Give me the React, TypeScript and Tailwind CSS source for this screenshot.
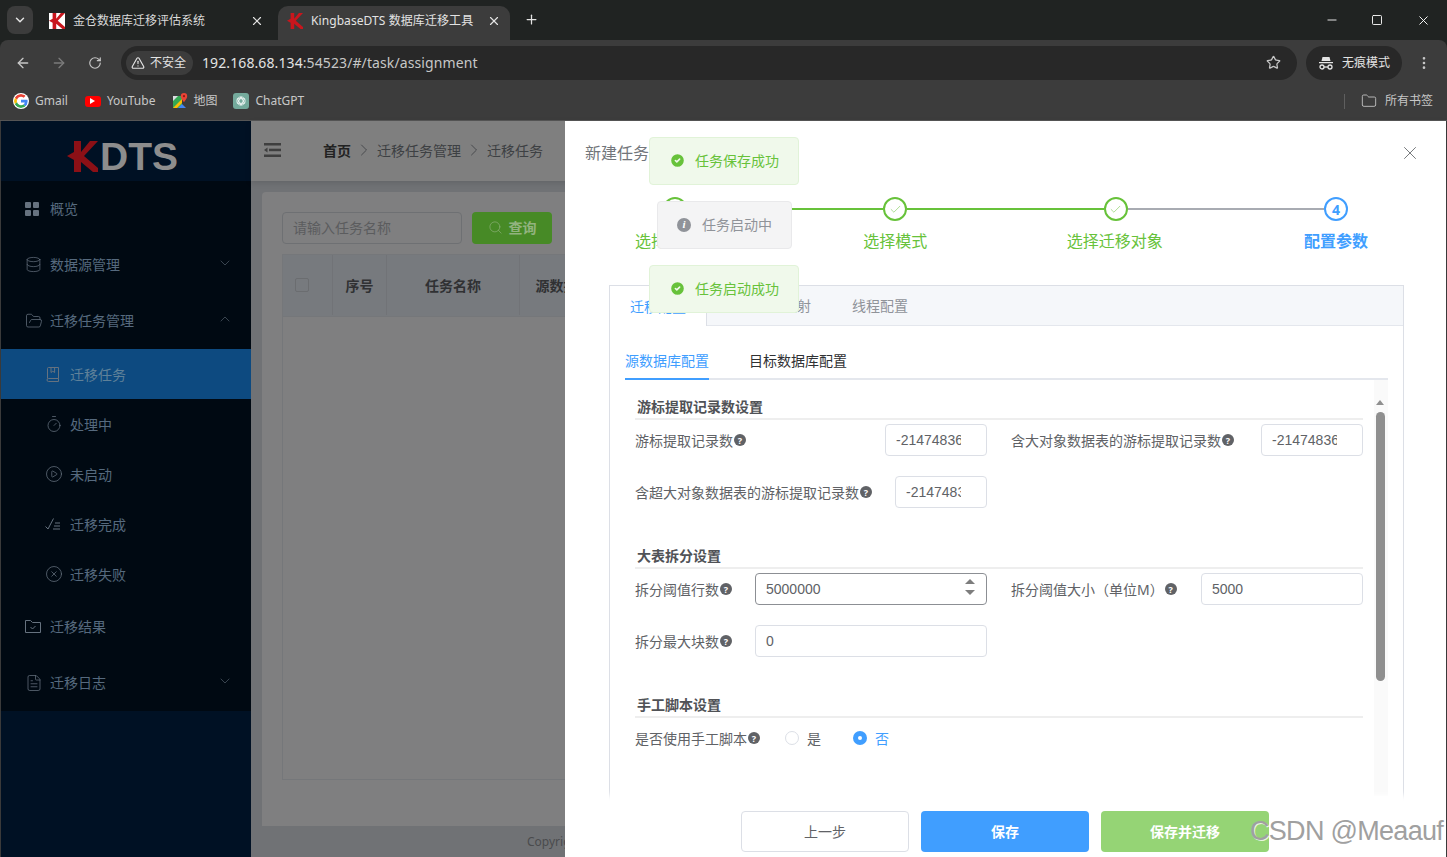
import type { ReactNode } from "react";
import {
  ArrowLeft, ArrowRight, Check, ChevronDown, ChevronRight, ChevronUp, CircleCheck, CirclePlay, CircleX, Database,
  EllipsisVertical, FileText, Folder, FolderOpen, Minus, Plus, RotateCw, Search, Square, Star, Timer, TriangleAlert, X,
} from "lucide-react";

const KMark = ({ className }: { className: string }) => (
  <svg viewBox="0 0 31 31" className={className}>
    <path fill="currentColor" d="M7 0h7v11L23 0h8L17 15l14 12v4h-5L14 21v10H7V19L0 15l7-4z" />
  </svg>
);

const GoogleIcon = () => (
  <svg viewBox="0 0 48 48" className="h-4 w-4 rounded-full bg-white p-px">
    <path fill="#EA4335" d="M24 9.5c3.5 0 6.700 1.200 9.200 3.600l6.900-6.900C35.900 2.400 30.500 0 24 0 14.600 0 6.500 5.400 2.600 13.200l8 6.200C12.500 13.600 17.800 9.500 24 9.500z" />
    <path fill="#4285F4" d="M46.900 24.500c0-1.600-.1-3.100-.4-4.500H24v9h12.900c-.6 3-2.200 5.500-4.800 7.200l7.700 6c4.500-4.200 7.100-10.300 7.100-17.700z" />
    <path fill="#FBBC05" d="M10.500 28.600c-.5-1.500-.8-3-.8-4.600s.3-3.100.8-4.600l-8-6.200C.9 16.500 0 20.100 0 24s.9 7.500 2.600 10.800l7.900-6.200z" />
    <path fill="#34A853" d="M24 48c6.500 0 11.900-2.100 15.900-5.800l-7.700-6c-2.200 1.400-4.900 2.300-8.200 2.300-6.200 0-11.500-4.200-13.400-9.800l-8 6.200C6.500 42.600 14.600 48 24 48z" />
  </svg>
);

const MapsIcon = () => (
  <svg viewBox="0 0 16 16" className="h-4 w-4">
    <path fill="#34A853" d="M1 3h9v12H1z" />
    <path fill="#FBBC05" d="M1 15 10 6v4l-5 5z" />
    <path fill="#4285F4" d="M6 15l4-4 4 4z" />
    <path fill="#DADCE0" d="M1 3h5L1 8z" />
    <path fill="#EA4335" d="M12 0a3.200 3.200 0 0 0-3.200 3.200C8.800 5.500 12 9 12 9s3.200-3.500 3.200-5.800A3.200 3.200 0 0 0 12 0z" />
    <circle cx="12" cy="3.200" r="1.100" fill="#8a1c14" />
  </svg>
);

const IncognitoIcon = () => (
  <svg viewBox="0 0 16 16" className="h-4 w-4 text-[#e3e3e3]" fill="none" stroke="currentColor" strokeWidth="1.300">
    <path fill="currentColor" stroke="none" d="M4.500 2h7l1 4h-9zM1 7h14v1.300H1z" />
    <circle cx="4" cy="12" r="2" />
    <circle cx="12" cy="12" r="2" />
    <path d="M6 12h4" />
  </svg>
);

const ChatGptIcon = () => (
  <span className="flex h-4 w-4 items-center justify-center rounded-[3px] bg-[#74aa9c]">
    <svg viewBox="0 0 16 16" className="h-3 w-3" fill="none" stroke="white" strokeWidth="1">
      <circle cx="8" cy="8" r="5.500" />
      <path d="M8 2.500 12.700 11H3.300z" />
      <path d="M3.300 5h9.400L8 13.500z" />
    </svg>
  </span>
);

const GridIcon = () => (
  <svg viewBox="0 0 14 14" className="h-[14px] w-[14px] fill-[#66727f]">
    <rect x="0" y="0" width="6" height="6" rx="1" />
    <rect x="8" y="0" width="6" height="6" rx="1" />
    <rect x="0" y="8" width="6" height="6" rx="1" />
    <rect x="8" y="8" width="6" height="6" rx="1" />
  </svg>
);

const BookIcon = () => (
  <svg viewBox="0 0 16 16" className="h-4 w-4" fill="none" stroke="currentColor" strokeWidth="1">
    <path d="M2.500 12.500V2.500a1 1 0 0 1 1-1h10v11h-10a1.500 1.500 0 0 0 0 3h10v-3" />
    <path d="M6 1.500v5l1.800-1.300 1.800 1.300v-5" />
  </svg>
);

const DoneIcon = () => (
  <svg viewBox="0 0 16 16" className="h-4 w-4" fill="none" stroke="currentColor" strokeWidth="1">
    <path d="M0.500 10.500 3 13 8.500 2.500M10 7h5M9 10h6M8 13h7" />
  </svg>
);

const FolderDoneIcon = () => (
  <svg viewBox="0 0 16 16" className="h-4 w-4" fill="none" stroke="currentColor" strokeWidth="1">
    <path d="M.5 1.500h5l2 2h8v10H.5z" />
    <path d="M5.500 8 7.500 10 10.500 7" />
  </svg>
);

const HamburgerIcon = () => (
  <svg viewBox="0 0 17 14" className="h-[14px] w-[17px] fill-[#3f3f3f]">
    <rect x="0" y="0" width="17" height="2.500" />
    <rect x="5" y="5.700" width="12" height="2.500" />
    <rect x="0" y="11.500" width="17" height="2.500" />
    <path d="M0 7 3.500 4.500v5z" />
  </svg>
);

type MenuItem = { label: string; icon: ReactNode; arrow?: "up" | "down"; sub?: boolean; active?: boolean };

const menu: MenuItem[] = [
  { label: "概览", icon: <GridIcon /> },
  { label: "数据源管理", icon: <Database size={17} strokeWidth={1} />, arrow: "down" },
  { label: "迁移任务管理", icon: <FolderOpen size={18} strokeWidth={1} />, arrow: "up" },
  { label: "迁移任务", icon: <BookIcon />, sub: true, active: true },
  { label: "处理中", icon: <Timer size={18} strokeWidth={1} />, sub: true },
  { label: "未启动", icon: <CirclePlay size={18} strokeWidth={1} />, sub: true },
  { label: "迁移完成", icon: <DoneIcon />, sub: true },
  { label: "迁移失败", icon: <CircleX size={18} strokeWidth={1} />, sub: true },
  { label: "迁移结果", icon: <FolderDoneIcon /> },
  { label: "迁移日志", icon: <FileText size={18} strokeWidth={1} />, arrow: "down" },
];

function Sidebar() {
  return (
    <aside className="flex w-[250px] shrink-0 flex-col bg-[#001124]">
      <div className="flex h-[60px] items-center justify-center gap-[2px] pt-[10px] pr-[7px]">
        <KMark className="h-[31px] w-[31px] text-[#8c1016]" />
        <span className="font-['Liberation_Sans',sans-serif] text-[39px] leading-none font-bold text-[#8d8d8d]">DTS</span>
      </div>
      <nav className="bg-[#000912]">
        {menu.map((item) => (
          <div
            key={item.label}
            className={`flex items-center text-[14px] ${item.sub ? "h-[50px] pl-[44px]" : "h-[56px] pb-[1px] pl-[24px]"} ${
              item.active ? "bg-[#0d4a80] text-[#5f8199]" : "text-[#566a7e]"
            }`}
          >
            <span className="flex w-[25px] shrink-0 text-[#66727f]">{item.icon}</span>
            <span className="flex-1">{item.label}</span>
            {item.arrow === "down" && <ChevronDown size={16} strokeWidth={1} className="mr-[18px] mb-[3px] text-[#56626e]" />}
            {item.arrow === "up" && <ChevronUp size={16} strokeWidth={1} className="mr-[18px] mb-[3px] text-[#56626e]" />}
          </div>
        ))}
      </nav>
    </aside>
  );
}

function BrowserChrome() {
  return (
    <header className="h-[120px] shrink-0 bg-[#202322] text-[#e3e3e3]">
      <div className="flex h-[40px] items-end">
        <div className="mb-[6px] ml-[7px] flex h-[28px] w-[26px] items-center justify-center rounded-[8px] bg-[#3c3c3c]">
          <ChevronDown size={14} strokeWidth={2.500} />
        </div>
        <div className="flex h-[34px] w-[245px] items-center pr-[14px] pb-[4px] pl-[16px]">
          <span className="flex h-4 w-4 items-center justify-center bg-white">
            <KMark className="h-4 w-4 text-[#c8161d]" />
          </span>
          <span className="ml-2 flex-1 text-[12px] text-[#d9d9d9]">金仓数据库迁移评估系统</span>
          <X size={14} />
        </div>
        <div className="flex h-[34px] w-[232px] items-center rounded-t-[10px] bg-[#3c3c3c] pr-[9px] pb-[4px] pl-[9px]">
          <KMark className="h-4 w-4 text-[#c8161d]" />
          <span className="ml-[8px] flex-1 text-[12px] tracking-[0.080px] text-[#e3e3e3]">KingbaseDTS 数据库迁移工具</span>
          <X size={14} />
        </div>
        <Plus size={15} className="mb-[13px] ml-[14px]" />
        <div className="flex flex-1 justify-end self-start pt-[13px] pr-[16px] text-white">
          <Minus size={14} strokeWidth={1.500} className="mr-[32px]" />
          <Square size={12} strokeWidth={1.800} className="mt-px mr-[33px]" />
          <X size={15} strokeWidth={1.500} />
        </div>
      </div>
      <div className="h-[80px] rounded-t-[8px] bg-[#3c3c3c] pl-px">
        <div className="flex h-[45px] items-center">
          <ArrowLeft size={16} className="ml-[14px] text-[#c7c7c7]" />
          <ArrowRight size={16} className="ml-[20px] text-[#7b7b7b]" />
          <RotateCw size={14} className="ml-[21px] text-[#c7c7c7]" />
          <div className="ml-[19px] flex h-[34px] w-[1176px] items-center rounded-full bg-[#282828] pr-[16px] pl-[5px]">
            <div className="flex h-[24px] w-[67px] shrink-0 items-center gap-[5px] rounded-full bg-[#3c3c3c] pl-[5px] text-[12px]">
              <TriangleAlert size={14} />
              <span>不安全</span>
            </div>
            <div className="ml-[9px] flex-1 text-[14px] tracking-[0.100px] text-[#c7c7c7]">
              <span className="text-[#e3e3e3]">192.168.68.134</span>:54523/#/task/assignment
            </div>
            <Star size={15} className="text-[#c7c7c7]" />
          </div>
          <div className="ml-[9px] flex h-[34px] w-[96px] items-center gap-[8px] rounded-full bg-[#282828] pl-[12px] text-[12px]">
            <IncognitoIcon />
            <span>无痕模式</span>
          </div>
          <EllipsisVertical size={16} className="ml-[14px] text-[#c7c7c7]" />
        </div>
        <div className="flex h-[35px] items-center pb-[3px] text-[12px] text-[#c7c7c7]">
          <span className="ml-[12px] flex items-center gap-[6px]"><GoogleIcon />Gmail</span>
          <span className="ml-[17px] flex items-center gap-[6px]">
            <span className="flex h-[11px] w-4 items-center justify-center rounded-[3px] bg-[#f00]">
              <span className="h-0 w-0 border-y-[3px] border-l-[5px] border-y-transparent border-l-white" />
            </span>
            YouTube
          </span>
          <span className="ml-[17px] flex items-center gap-[5px]"><MapsIcon />地图</span>
          <span className="ml-[16px] flex items-center gap-[6px]"><ChatGptIcon />ChatGPT</span>
          <span className="ml-auto h-[15px] w-px bg-[#5f5f5f]" />
          <Folder size={16} strokeWidth={1.300} className="ml-[16px]" />
          <span className="mr-[14px] ml-[8px]">所有书签</span>
        </div>
      </div>
    </header>
  );
}

function MainBehind() {
  return (
    <main className="flex min-w-0 flex-1 flex-col bg-[#707275]">
      <div className="flex h-[60px] shrink-0 items-center bg-[#7f7f7f] pb-[2px] pl-[13px] text-[14px] text-[#3d4043] shadow-[0_2px_6px_rgba(0,0,0,0.12)]">
        <HamburgerIcon />
        <span className="ml-[42px] font-bold text-[#222]">首页</span>
        <ChevronRight size={20} strokeWidth={1} className="mx-[3px]" />
        <span>迁移任务管理</span>
        <ChevronRight size={20} strokeWidth={1} className="mx-[3px]" />
        <span>迁移任务</span>
      </div>
      <div className="mx-[11px] mt-[11px] flex h-[634px] flex-col rounded-t-[4px] bg-[#7f7f80] px-[20px] pt-[20px]">
        <div className="flex gap-[10px]">
          <div className="flex h-[32px] w-[180px] items-center rounded-[4px] border border-[#6e7073] pb-px pl-[10px] text-[14px] text-[#5b5c5e]">请输入任务名称</div>
          <div className="flex h-[32px] w-[80px] items-center justify-center gap-[6px] rounded-[4px] bg-[#478a26] pb-px text-[14px] font-bold text-[#92b37f]">
            <Search size={15} strokeWidth={1} />查询
          </div>
        </div>
        <div className="mt-[10px] flex-1 border border-[#75777a]">
          <div className="flex h-[62px] border-b border-[#75777a] bg-[#777a7e] pb-px text-[14px] font-bold text-[#303133]">
            <div className="flex w-[50px] items-center border-r border-[#717377] pl-[12px]">
              <span className="h-[14px] w-[14px] rounded-[2px] border border-[#6b6d70]" />
            </div>
            <div className="flex w-[54px] items-center justify-center border-r border-[#717377]">序号</div>
            <div className="flex w-[133px] items-center justify-center border-r border-[#717377]">任务名称</div>
            <div className="flex w-[88px] items-center justify-center border-r border-[#717377]">源数据库</div>
          </div>
        </div>
        <div className="h-[46px]" />
      </div>
      <div className="flex flex-1 items-center pl-[276px] text-[12px] text-[#4a4b4d]">Copyright © 2024</div>
    </main>
  );
}

function StepCircle({ n }: { n?: number }) {
  if (n) {
    return (
      <span className="flex h-[24px] w-[24px] shrink-0 items-center justify-center rounded-full border-2 border-[#409eff] text-[14px] font-bold text-[#409eff]">
        {n}
      </span>
    );
  }
  return (
    <span className="flex h-[24px] w-[24px] shrink-0 items-center justify-center rounded-full border-2 border-[#67c23a] text-[#67c23a]">
      <Check size={13} strokeWidth={1} />
    </span>
  );
}

function Help({ className = "ml-px" }: { className?: string }) {
  return (
    <span className={`inline-flex h-[12px] w-[12px] shrink-0 items-center justify-center rounded-full bg-[#606266] text-[9px] leading-none font-bold text-white ${className}`}>?</span>
  );
}

function Field({ label, value, width, focused }: { label: string; value: string; width: string; focused?: boolean }) {
  return (
    <div className="flex h-[32px] items-center justify-between">
      <span className="flex items-center text-[14px] text-[#606266]">
        {label}
        <Help />
      </span>
      <div className={`relative h-[32px] ${width}`}>
        <input
          readOnly
          value={value}
          className={`h-full w-full rounded-[4px] border bg-white pr-[25px] pl-[10px] font-['Liberation_Sans',sans-serif] text-[14px] text-[#606266] outline-none ${
            focused ? "border-[#8c8f94]" : "border-[#dcdfe6]"
          }`}
        />
        {focused && (
          <span className="absolute top-[6px] right-[12px] flex flex-col gap-[6px]">
            <span className="h-0 w-0 border-x-[5px] border-b-[5px] border-x-transparent border-b-[#7d7d7d]" />
            <span className="h-0 w-0 border-x-[5px] border-t-[5px] border-x-transparent border-t-[#7d7d7d]" />
          </span>
        )}
      </div>
    </div>
  );
}

function SectionTitle({ children, className = "" }: { children: ReactNode; className?: string }) {
  return (
    <div className={`h-[22px] border-b-2 border-[#eeeeee] pl-[2px] text-[14px] leading-[18px] font-bold text-[#505256] ${className}`}>
      {children}
    </div>
  );
}

function ConfigForm() {
  return (
    <div className="flex h-[416px] pl-[10px]">
      <div className="flex-1 pt-[18px] pr-[11px]">
        <SectionTitle>游标提取记录数设置</SectionTitle>
        <div className="mt-[4px] grid grid-cols-2 gap-x-[24px] gap-y-[20px]">
          <Field label="游标提取记录数" value="-2147483648" width="w-[102px]" />
          <Field label="含大对象数据表的游标提取记录数" value="-2147483648" width="w-[102px]" />
          <Field label="含超大对象数据表的游标提取记录数" value="-2147483648" width="w-[92px]" />
        </div>
        <SectionTitle className="mt-[39px]">大表拆分设置</SectionTitle>
        <div className="mt-[4px] grid grid-cols-2 gap-x-[24px] gap-y-[20px]">
          <Field label="拆分阈值行数" value="5000000" width="w-[232px]" focused />
          <Field label="拆分阈值大小（单位M）" value="5000" width="w-[162px]" />
          <Field label="拆分最大块数" value="0" width="w-[232px]" />
        </div>
        <SectionTitle className="mt-[39px]">手工脚本设置</SectionTitle>
        <div className="mt-[4px] flex h-[32px] items-center text-[14px] text-[#606266]">
          <span>是否使用手工脚本</span>
          <Help />
          <span className="ml-[25px] h-[14px] w-[14px] rounded-full border border-[#dcdfe6]" />
          <span className="ml-[8px]">是</span>
          <span className="ml-[32px] flex h-[14px] w-[14px] items-center justify-center rounded-full bg-[#409eff]">
            <span className="h-[4px] w-[4px] rounded-full bg-white" />
          </span>
          <span className="ml-[8px] text-[#409eff]">否</span>
        </div>
      </div>
      {/* scrollbar */}
      <div className="flex w-[14px] flex-col items-center bg-[#fafafa] pt-[20px] pr-[2px]">
        <span className="h-0 w-0 border-x-[4px] border-b-[5px] border-x-transparent border-b-[#8f8f8f]" />
        <span className="mt-[7px] h-[269px] w-[9px] rounded-full bg-[#8f8f8f]" />
      </div>
    </div>
  );
}

function Drawer() {
  return (
    <section className="absolute top-0 right-px bottom-0 flex w-[881px] flex-col overflow-hidden bg-white">
      <div className="flex h-[64px] shrink-0 items-center justify-between pr-[25px] pb-[1px] pl-[20px] text-[16px] text-[#72767b]">
        <span>新建任务</span>
        <X size={22} strokeWidth={1} className="text-[#6b6e72]" />
      </div>
      <div className="shrink-0 pt-[12px] pr-[98px] pl-[98px]">
        <div className="flex items-center">
          <StepCircle />
          <span className="h-[2px] flex-1 bg-[#67c23a]" />
          <StepCircle />
          <span className="h-[2px] flex-1 bg-[#67c23a]" />
          <StepCircle />
          <span className="h-[2px] flex-1 bg-[#a8abb2]" />
          <StepCircle n={4} />
        </div>
      </div>
      <div className="mt-[8px] flex shrink-0 justify-between pr-[78px] pl-[70px] text-[16px] leading-[24px] text-[#67c23a]">
        <span>选择数据源</span>
        <span className="ml-[7px]">选择模式</span>
        <span className="ml-[-2px]">选择迁移对象</span>
        <span className="font-bold text-[#409eff]">配置参数</span>
      </div>
      <div className="mt-[32px] mr-[42px] ml-[44px] flex-1 border-x border-t border-[#dcdfe6]">
        <div className="flex h-[40px] border-b border-[#e4e7ed] bg-[#f5f7fa] text-[14px] text-[#909399]">
          <div className="-mb-px flex w-[97px] items-center border-r border-[#dcdfe6] bg-white pl-[20px] text-[#409eff]">迁移配置</div>
          <div className="flex items-center pl-[20px]">数据类型映射</div>
          <div className="flex items-center pl-[41px]">线程配置</div>
        </div>
        <div className="px-[15px] pt-[14px]">
          <div className="flex h-[40px] border-b-2 border-[#e4e7ed] text-[14px] text-[#303133]">
            <span className="-mb-[2px] flex w-[84px] items-center border-b-2 border-[#409eff] pt-[3px] text-[#409eff]">源数据库配置</span>
            <span className="ml-[40px] flex items-center pt-[3px]">目标数据库配置</span>
          </div>
          <ConfigForm />
        </div>
      </div>
      <div className="relative flex h-[56px] shrink-0 items-start justify-center gap-[12px] bg-white pt-[10px] pr-[1px] text-[14px] shadow-[0_-6px_6px_white]">
        <span className="flex h-[41px] w-[168px] items-center justify-center rounded-[4px] border border-[#dcdfe6] text-[#606266]">上一步</span>
        <span className="flex h-[41px] w-[168px] items-center justify-center rounded-[4px] bg-[#409eff] font-bold text-white">保存</span>
        <span className="flex h-[41px] w-[168px] items-center justify-center rounded-[4px] bg-[#95d475] font-bold text-white">保存并迁移</span>
      </div>
    </section>
  );
}

function Toast({ text, pos, info }: { text: string; pos: string; info?: boolean }) {
  return (
    <div
      className={`absolute z-10 flex h-[48px] items-center rounded-[4px] border pb-px pl-[19px] text-[14px] ${pos} ${
        info ? "gap-[11px] border-[#e9e9eb] bg-[#f4f4f5] text-[#909399]" : "gap-[9px] border-[#e1f3d8] bg-[#f0f9eb] text-[#67c23a]"
      }`}
    >
      {info ? (
        <span className="flex h-[14px] w-[14px] items-center justify-center rounded-full bg-[#909399] font-['Liberation_Serif',serif] text-[11px] font-bold text-white italic">i</span>
      ) : (
        <CircleCheck size={17} strokeWidth={2.200} className="fill-[#67c23a] text-[#f0f9eb]" />
      )}
      {text}
    </div>
  );
}

export default function App() {
  return (
    <div className="relative flex h-[857px] w-[1447px] flex-col overflow-hidden bg-[#202322] font-['Noto_Sans','Noto_Sans_CJK_SC',sans-serif]">
      <BrowserChrome />
      <div className="relative flex min-h-0 flex-1 border-t border-[#555] bg-[#3a3a3a] px-px">
        <Sidebar />
        <MainBehind />
        <Drawer />
        <Toast text="任务保存成功" pos="top-[16px] left-[649px] w-[150px]" />
        <Toast text="任务启动中" pos="top-[80px] left-[657px] w-[135px]" info />
        <Toast text="任务启动成功" pos="top-[144px] left-[649px] w-[150px]" />
      </div>
      <span className="pointer-events-none absolute top-[812px] left-[1250px] font-['Liberation_Sans',sans-serif] text-[27px] leading-[38px] tracking-[-0.700px] whitespace-nowrap text-[#a0a0a0] [text-shadow:1px_1px_0_rgba(255,255,255,0.8)]">
        CSDN @Meaauf
      </span>
    </div>
  );
}
